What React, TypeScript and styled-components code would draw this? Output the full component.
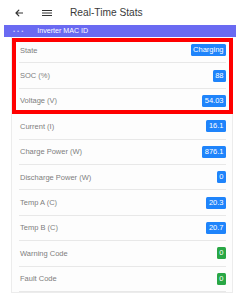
import styled, { createGlobalStyle } from "styled-components";

const GlobalStyle = createGlobalStyle`
  body {
    margin: 0;
    background: #ffffff;
    font-family: "Liberation Sans", Arial, sans-serif;
  }
`;

const Page = styled.div`
  width: 240px;
  height: 296px;
  overflow: hidden;
  display: flex;
  flex-direction: column;
`;

const Header = styled.header`
  height: 25px;
  display: flex;
  align-items: center;
  padding-left: 15px;
  box-sizing: border-box;
`;

const IconButton = styled.span`
  display: flex;
  align-items: center;
  margin-right: ${({ $gap }: { $gap: number }) => $gap}px;
`;

const Title = styled.h1`
  margin: 0;
  font-size: 10.2px;
  font-weight: normal;
  color: #3a3a3a;
`;

const DeviceBar = styled.div`
  height: 12px;
  margin: 0 4px;
  background: #6a6af2;
  display: flex;
  align-items: center;
  padding-left: 9px;
  gap: 12px;
`;

const Dots = styled.span`
  font-size: 6px;
  letter-spacing: 2px;
  color: #c9c9ff;
`;

const DeviceName = styled.span`
  font-size: 7.1px;
  color: #ffffff;
`;

const Card = styled.div`
  margin-left: 11px;
  width: 222px;
  box-sizing: border-box;
  border: 1px solid #ececec;
  border-top: none;
  padding: 1px 6px 0 7px;
  background: #fdfdfd;
`;

const Highlight = styled.div`
  position: relative;

  &::after {
    content: "";
    position: absolute;
    top: 0;
    bottom: 0;
    left: -7px;
    right: -7px;
    border: 4px solid #ff0000;
    pointer-events: none;
  }
`;

const Row = styled.div`
  height: 25.4px;
  box-sizing: border-box;
  border-bottom: 1px solid #e8e8e8;
  display: flex;
  align-items: center;
  justify-content: space-between;
  padding-left: 1px;
`;

const Label = styled.span`
  font-size: 7.5px;
  color: #7d7d7d;
`;

const Badge = styled.span<{ $tone: "blue" | "green" }>`
  height: 12px;
  line-height: 12px;
  padding: 0 2.5px;
  border-radius: 1.5px;
  font-size: 7.5px;
  color: #ffffff;
  background: ${({ $tone }) => ($tone === "green" ? "#29a745" : "#1f84fb")};
`;

type Stat = { label: string; value: string; tone: "blue" | "green" };

const highlighted: Stat[] = [
  { label: "State", value: "Charging", tone: "blue" },
  { label: "SOC (%)", value: "88", tone: "blue" },
  { label: "Voltage (V)", value: "54.03", tone: "blue" },
];

const stats: Stat[] = [
  { label: "Current (I)", value: "16.1", tone: "blue" },
  { label: "Charge Power (W)", value: "876.1", tone: "blue" },
  { label: "Discharge Power (W)", value: "0", tone: "blue" },
  { label: "Temp A (C)", value: "20.3", tone: "blue" },
  { label: "Temp B (C)", value: "20.7", tone: "blue" },
  { label: "Warning Code", value: "0", tone: "green" },
  { label: "Fault Code", value: "0", tone: "green" },
];

const StatRow = ({ stat }: { stat: Stat }) => (
  <Row>
    <Label>{stat.label}</Label>
    <Badge $tone={stat.tone}>{stat.value}</Badge>
  </Row>
);

const App = () => {
  return (
    <Page>
      <GlobalStyle />
      <Header>
        <IconButton $gap={19}>
          <svg width="8" height="8" viewBox="0 0 8 8" fill="none">
            <path
              d="M7.5 4H1 M3.8 1.2 L1 4 L3.8 6.8"
              stroke="#333"
              strokeWidth="1.2"
              strokeLinecap="round"
              strokeLinejoin="round"
            />
          </svg>
        </IconButton>
        <IconButton $gap={18}>
          <svg width="10" height="8" viewBox="0 0 10 8" fill="none">
            <path d="M0 1.5H10 M0 4H10 M0 6.5H10" stroke="#333" strokeWidth="1" />
          </svg>
        </IconButton>
        <Title>Real-Time Stats</Title>
      </Header>
      <DeviceBar>
        <Dots>•••</Dots>
        <DeviceName>Inverter MAC ID</DeviceName>
      </DeviceBar>
      <Card>
        <Highlight>
          {highlighted.map((s) => (
            <StatRow key={s.label} stat={s} />
          ))}
        </Highlight>
        {stats.map((s) => (
          <StatRow key={s.label} stat={s} />
        ))}
      </Card>
    </Page>
  );
};

export default App;
